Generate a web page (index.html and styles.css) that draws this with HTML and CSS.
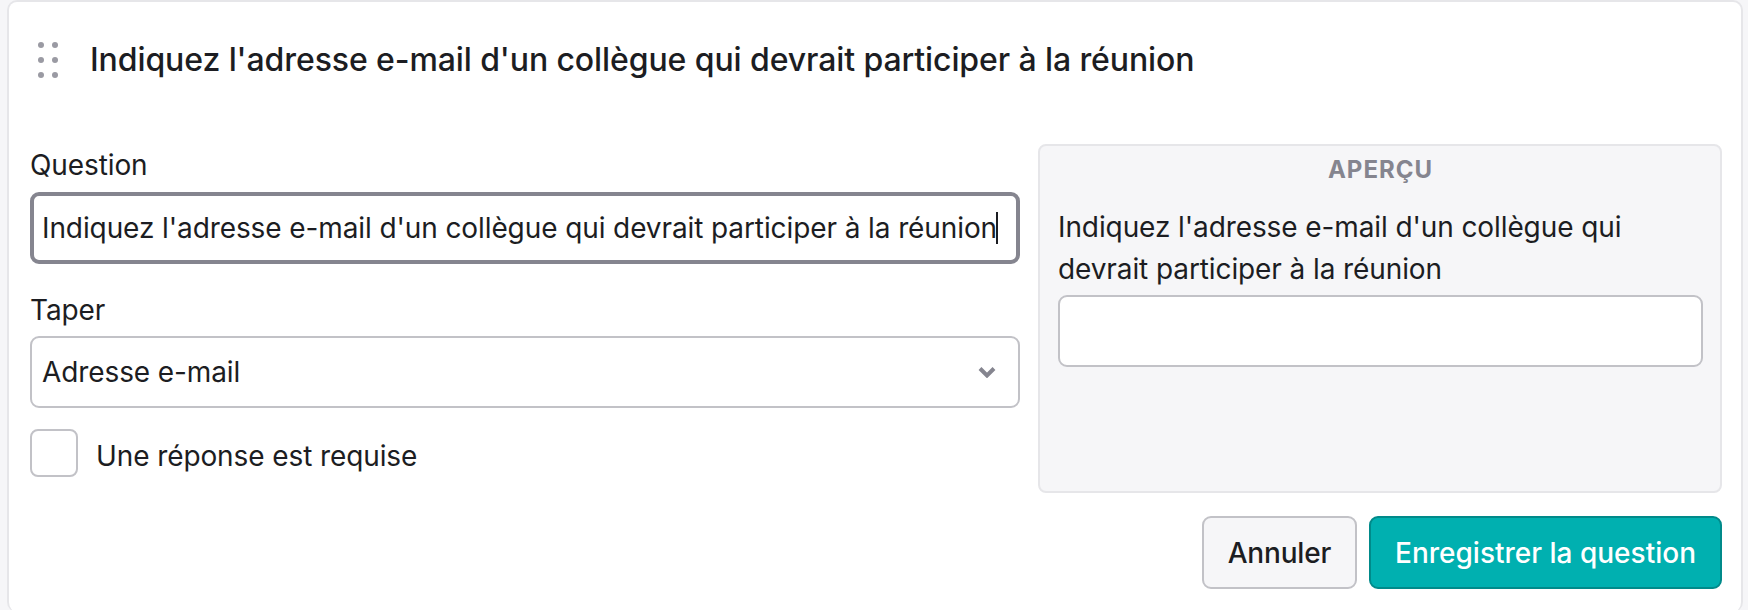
FILE: index.html
```html
<!DOCTYPE html>
<html lang="fr">
<head>
<meta charset="utf-8">
<title>Question</title>
<link rel="stylesheet" href="styles.css">
</head>
<body>
<section class="card">
  <header class="head">
    <svg class="grip" width="20" height="36" viewBox="0 0 20 36" aria-hidden="true">
      <circle cx="3" cy="3" r="3"/><circle cx="17" cy="3" r="3"/>
      <circle cx="3" cy="18" r="3"/><circle cx="17" cy="18" r="3"/>
      <circle cx="3" cy="33" r="3"/><circle cx="17" cy="33" r="3"/>
    </svg>
    <h2 class="title">Indiquez l'adresse e-mail d'un collègue qui devrait participer à la réunion</h2>
  </header>
  <div class="columns">
    <div class="form">
      <label class="label">Question</label>
      <div class="field field-focus"><span>Indiquez l'adresse e-mail d'un collègue qui devrait participer à la réunion</span><i class="caret"></i></div>
      <label class="label label-type">Taper</label>
      <div class="field field-select">
        <span>Adresse e-mail</span>
        <svg class="chev" width="18" height="12" viewBox="0 0 18 12" aria-hidden="true"><path d="M2 2.5 9 9.5 16 2.5"/></svg>
      </div>
      <div class="check-row"><span class="check"></span><span class="check-text">Une réponse est requise</span></div>
    </div>
    <aside class="preview">
      <div class="preview-title">APERÇU</div>
      <p class="preview-q">Indiquez l'adresse e-mail d'un collègue qui devrait participer à la réunion</p>
      <div class="field preview-input"></div>
    </aside>
  </div>
  <footer class="actions">
    <button class="btn btn-cancel">Annuler</button>
    <button class="btn btn-save">Enregistrer la question</button>
  </footer>
</section>
</body>
</html>
```
FILE: styles.css
```css
* { box-sizing: border-box; }
html, body { margin: 0; height: 610px; overflow: hidden; }
body {
  background: #f6f6f8;
  font-family: Inter, "Liberation Sans", sans-serif;
  font-size: 28px;
  letter-spacing: -0.1px;
  color: #1c1d22;
  padding-left: 7px;
  padding-right: 5px;
}
.card {
  height: 612px;
  background: #fff;
  border: 2px solid #e6e6e9;
  border-bottom: 0;
  border-radius: 10px;
  padding: 0 19px 0 21px;
}
.head { display: flex; align-items: center; height: 116px; padding-left: 8px; }
.grip { fill: #9a9aa3; flex: none; margin-right: 32px; }
.title { margin: 0; font-size: 32px; font-weight: 500; line-height: 1.3; }
.columns { display: grid; grid-template-columns: 990px 1fr; gap: 18px; margin-top: 26px; }
.form { display: flex; flex-direction: column; align-items: stretch; }
.label { line-height: 42px; height: 42px; }
.label-type { margin-top: 25px; }
.field {
  height: 72px;
  display: flex;
  align-items: center;
  padding: 0 10px;
  background: #fff;
  border: 2px solid #c2c2c7;
  border-radius: 9px;
  white-space: nowrap;
}
.field-focus { border: 4px solid #85858f; padding: 0 8px; margin-top: 6px; }
.field-select { justify-content: space-between; margin-top: 5px; padding-right: 22px; }
.chev { fill: none; stroke: #85858f; stroke-width: 4; }
.caret { width: 2px; height: 32px; background: #1c1d22; margin-left: -1px; }
.check-row { display: flex; align-items: center; gap: 18px; margin-top: 21px; }
.check { width: 48px; height: 48px; border: 2px solid #c2c2c7; border-radius: 8px; background: #fff; }
.check-text { padding-top: 6px; }
.preview {
  height: 349px;
  background: #f6f6f8;
  border: 2px solid #e6e6e9;
  border-radius: 8px;
  padding: 0 17px 0 18px;
}
.preview-title {
  text-align: center;
  font-size: 24px;
  font-weight: 700;
  letter-spacing: 1px;
  color: #85858f;
  line-height: 30px;
  margin-top: 9px;
}
.preview-q { margin: 21px 0 0; line-height: 42px; }
.preview-input { margin-top: 5px; }
.actions { display: flex; justify-content: flex-end; gap: 12px; margin-top: 23px; }
.btn {
  height: 73px;
  font: 500 28px/1 Inter, "Liberation Sans", sans-serif;
  letter-spacing: 0;
  border-radius: 9px;
  padding: 0 24px;
}
.btn-cancel { background: #f6f6f8; border: 2px solid #c2c2c7; color: #1c1d22; letter-spacing: -0.2px; }
.btn-save { background: #00b0b0; border: 2px solid #008a8a; color: #fff; }
```
